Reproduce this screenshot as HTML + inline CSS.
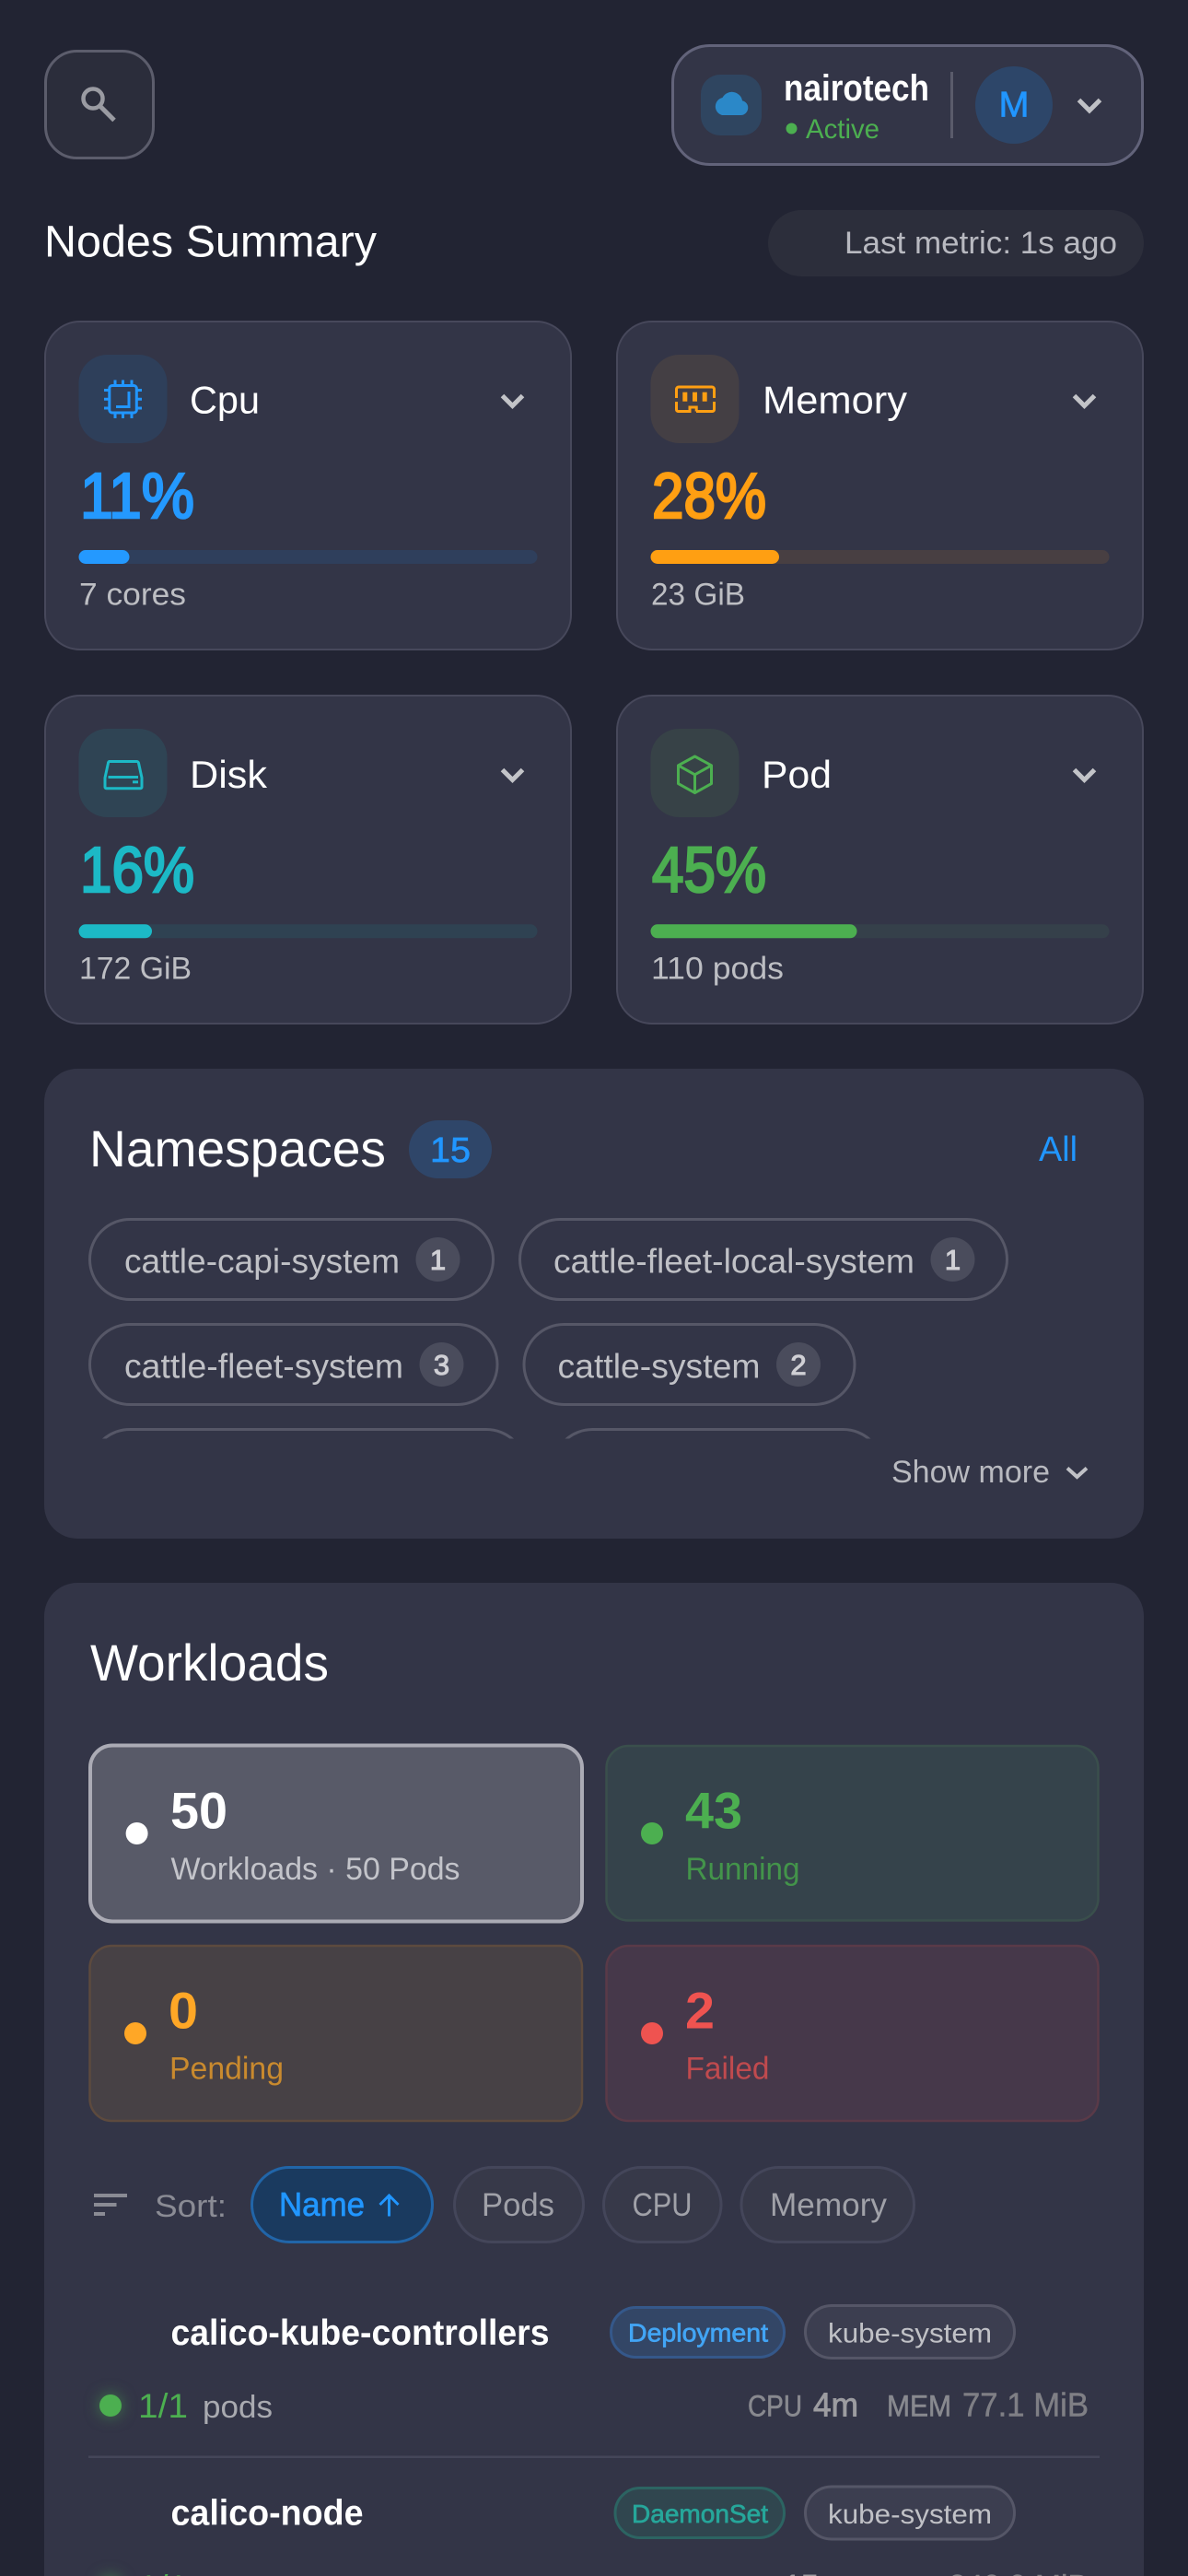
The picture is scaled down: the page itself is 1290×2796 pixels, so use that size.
<!DOCTYPE html>
<html lang="en">
<head>
<meta charset="utf-8">
<title>Dashboard</title>
<style>
html,body{margin:0;padding:0;background:#222433;width:1290px;height:2796px;overflow:hidden}
svg{display:block}
text{font-family:"Liberation Sans",Arial,sans-serif;white-space:pre}
</style>
</head>
<body>
<svg xmlns="http://www.w3.org/2000/svg" width="1290" height="2796" viewBox="0 0 1290 2796">
<defs>
<clipPath id="nsclip"><rect x="48" y="1300" width="1194" height="261.5"/></clipPath>
</defs>
<rect width="1290" height="2796" fill="#222433"/>

<!-- Header -->
<rect x="49.500" y="55.500" width="117" height="116" rx="34" fill="#2b2d3b" stroke="#5c5d6c" stroke-width="3"/>
<circle cx="101" cy="107" r="10.500" fill="none" stroke="#9a9ba2" stroke-width="4.500"/>
<path d="M109 115.500L124 130.500" fill="none" stroke="#9a9ba2" stroke-width="5"/>

<rect x="730.500" y="49.500" width="510" height="129" rx="40" fill="#333547" stroke="#62637a" stroke-width="3"/>
<rect x="761" y="81" width="66" height="66" rx="21" fill="#2f4560"/>
<path d="M784 125h20.500a8 8 0 0 0 1.500-15.800a11.500 11.500 0 0 0-21.500-3.200a9.800 9.800 0 0 0-.5 19z" fill="#2b88c8"/>
<text x="851" y="109" font-size="40" font-weight="700" fill="#ffffff" textLength="158" lengthAdjust="spacingAndGlyphs">nairotech</text>
<circle cx="859.500" cy="139.500" r="6" fill="#4caf50"/>
<text x="875" y="150" font-size="29.500" fill="#4caf50" textLength="80" lengthAdjust="spacingAndGlyphs">Active</text>
<rect x="1032" y="78" width="3" height="72" fill="#5a5b6b"/>
<circle cx="1101" cy="114" r="42" fill="#2d4669"/>
<text x="1084.500" y="126.700" font-size="39" fill="#2196ff" stroke="#2196ff" stroke-width=".7" textLength="33" lengthAdjust="spacingAndGlyphs">M</text>
<polyline points="1171.500,108.500 1183,120 1194.500,108.500" fill="none" stroke="#c0c1c6" stroke-width="5"/>

<!-- Nodes summary -->
<text x="48" y="278.500" font-size="48" fill="#ffffff" textLength="361" lengthAdjust="spacingAndGlyphs">Nodes Summary</text>
<rect x="834" y="228" width="408" height="72" rx="36" fill="#2c2e3b"/>
<text x="917" y="275" font-size="34" fill="#b8b9c0" textLength="296" lengthAdjust="spacingAndGlyphs">Last metric: 1s ago</text>

<!-- Cpu -->
<rect x="49" y="349" width="571" height="356" rx="38" fill="#333547" stroke="#47485b" stroke-width="2"/>
<rect x="85.500" y="385" width="96" height="96" rx="31" fill="#2e3f5a"/>
<g fill="none" stroke="#2196ff" stroke-width="3">
<rect x="118.800" y="418.500" width="29.500" height="29.500" rx="3"/>
<path d="M140 425v16.500h-14"/>
<path d="M125 412.500v6M133.500 412.500v6M143 412.500v6M125 448v6M133.500 448v6M143 448v6M113 423.500h6M113 433.300h6M113 443h6M148 423.500h6M148 433.300h6M148 443h6"/>
</g>
<text x="206" y="448.300" font-size="41.500" fill="#ffffff" textLength="76" lengthAdjust="spacingAndGlyphs">Cpu</text>
<polyline points="545.500,429.500 556.500,440.500 567.500,429.500" fill="none" stroke="#c3c4c8" stroke-width="5"/>
<text x="87" y="562" font-size="70" fill="#2499ff" stroke="#2499ff" stroke-width="2.600" textLength="124" lengthAdjust="spacingAndGlyphs">11%</text>
<rect x="85.500" y="597" width="498" height="15" rx="7.500" fill="#2f3f5c"/>
<rect x="85.500" y="597" width="55" height="15" rx="7.500" fill="#2499ff"/>
<text x="86" y="656.700" font-size="34" fill="#bdbec3" textLength="116" lengthAdjust="spacingAndGlyphs">7 cores</text>

<!-- Memory -->
<rect x="670" y="349" width="571" height="356" rx="38" fill="#333547" stroke="#47485b" stroke-width="2"/>
<rect x="706.500" y="385" width="96" height="96" rx="31" fill="#443f44"/>
<g fill="none" stroke="#ff9f12" stroke-width="3">
<path d="M734.500 432v-9.500a2.500 2.500 0 0 1 2.500-2.500h36a2.500 2.500 0 0 1 2.500 2.500v9.500"/>
<path d="M734.500 436v8.500a2 2 0 0 0 2 2h12.500v-4.500h7.200v4.500"/>
<path d="M756 446.500h17.500a2 2 0 0 0 2-2v-8.500"/>
</g>
<g fill="#ff9f12"><rect x="741.300" y="425.700" width="5" height="10"/><rect x="752" y="425.700" width="5" height="10"/><rect x="762.700" y="425.700" width="5" height="10"/></g>
<text x="828" y="448.300" font-size="41.500" fill="#ffffff" textLength="157" lengthAdjust="spacingAndGlyphs">Memory</text>
<polyline points="1166.500,429.500 1177.500,440.500 1188.500,429.500" fill="none" stroke="#c3c4c8" stroke-width="5"/>
<text x="708" y="562" font-size="70" fill="#ff9f12" stroke="#ff9f12" stroke-width="2.600" textLength="124" lengthAdjust="spacingAndGlyphs">28%</text>
<rect x="706.500" y="597" width="498" height="15" rx="7.500" fill="#483f42"/>
<rect x="706.500" y="597" width="139.500" height="15" rx="7.500" fill="#ff9f12"/>
<text x="707" y="656.700" font-size="34" fill="#bdbec3" textLength="102" lengthAdjust="spacingAndGlyphs">23 GiB</text>

<!-- Disk -->
<rect x="49" y="755" width="571" height="356" rx="38" fill="#333547" stroke="#47485b" stroke-width="2"/>
<rect x="85.500" y="791" width="96" height="96" rx="31" fill="#2f4454"/>
<g fill="none" stroke="#1cb9c6" stroke-width="3">
<path d="M118.500 826.500h30a2 2 0 0 1 2 1.700l3.500 16v10a1.500 1.500 0 0 1-1.500 1.500h-37a1.500 1.500 0 0 1-1.500-1.500v-10l3.500-16a2 2 0 0 1 1-1.700z"/>
<path d="M117.500 843.500h32.500"/>
</g>
<rect x="144" y="847.300" width="6" height="3" fill="#1cb9c6"/>
<text x="206" y="854.800" font-size="41.500" fill="#ffffff" textLength="84" lengthAdjust="spacingAndGlyphs">Disk</text>
<polyline points="545.500,835.500 556.500,846.500 567.500,835.500" fill="none" stroke="#c3c4c8" stroke-width="5"/>
<text x="87" y="968" font-size="70" fill="#1cb9c6" stroke="#1cb9c6" stroke-width="2.600" textLength="124" lengthAdjust="spacingAndGlyphs">16%</text>
<rect x="85.500" y="1003.300" width="498" height="15" rx="7.500" fill="#2f4252"/>
<rect x="85.500" y="1003.300" width="79.500" height="15" rx="7.500" fill="#1cb9c6"/>
<text x="86" y="1062.700" font-size="34" fill="#bdbec3" textLength="122" lengthAdjust="spacingAndGlyphs">172 GiB</text>

<!-- Pod -->
<rect x="670" y="755" width="571" height="356" rx="38" fill="#333547" stroke="#47485b" stroke-width="2"/>
<rect x="706.500" y="791" width="96" height="96" rx="31" fill="#374247"/>
<path d="M754.500 821l18 9.800v19.800l-18 10-18-10v-19.800zM736.500 830.800l18 10 18-10M754.500 840.800v20" fill="none" stroke="#4caf50" stroke-width="3" stroke-linejoin="round"/>
<text x="827" y="854.800" font-size="41.500" fill="#ffffff" textLength="76" lengthAdjust="spacingAndGlyphs">Pod</text>
<polyline points="1166.500,835.500 1177.500,846.500 1188.500,835.500" fill="none" stroke="#c3c4c8" stroke-width="5"/>
<text x="708" y="968" font-size="70" fill="#4caf50" stroke="#4caf50" stroke-width="2.600" textLength="124" lengthAdjust="spacingAndGlyphs">45%</text>
<rect x="706.500" y="1003.300" width="498" height="15" rx="7.500" fill="#35404a"/>
<rect x="706.500" y="1003.300" width="224" height="15" rx="7.500" fill="#4caf50"/>
<text x="707" y="1062.700" font-size="34" fill="#bdbec3" textLength="144" lengthAdjust="spacingAndGlyphs">110 pods</text>

<!-- Namespaces -->
<rect x="48" y="1160" width="1194" height="510" rx="36" fill="#333547"/>
<text x="97" y="1266" font-size="55.500" fill="#ffffff" textLength="322" lengthAdjust="spacingAndGlyphs">Namespaces</text>
<rect x="444" y="1216" width="90" height="63" rx="31.500" fill="#2f4669"/>
<text x="467" y="1261" font-size="38" fill="#2196ff" stroke="#2196ff" stroke-width=".7" textLength="44" lengthAdjust="spacingAndGlyphs">15</text>
<text x="1128" y="1260" font-size="38" fill="#2196ff" textLength="42" lengthAdjust="spacingAndGlyphs">All</text>

<g fill="none" stroke="#565767" stroke-width="3">
<rect x="97.500" y="1323.500" width="438" height="87" rx="43.500"/>
<rect x="564.500" y="1323.500" width="529" height="87" rx="43.500"/>
<rect x="97.500" y="1437.500" width="442.500" height="87" rx="43.500"/>
<rect x="569" y="1437.500" width="359" height="87" rx="43.500"/>
<g clip-path="url(#nsclip)">
<rect x="97.500" y="1551.500" width="474" height="87" rx="43.500"/>
<rect x="600" y="1551.500" width="359" height="87" rx="43.500"/>
</g>
</g>
<g font-size="37" fill="#c0c1c6">
<text x="135" y="1381.500" textLength="299" lengthAdjust="spacingAndGlyphs">cattle-capi-system</text>
<text x="601" y="1381.500" textLength="392" lengthAdjust="spacingAndGlyphs">cattle-fleet-local-system</text>
<text x="135" y="1495.500" textLength="303" lengthAdjust="spacingAndGlyphs">cattle-fleet-system</text>
<text x="605.500" y="1495.500" textLength="220" lengthAdjust="spacingAndGlyphs">cattle-system</text>
</g>
<g fill="#4a4c5c">
<circle cx="475.500" cy="1367" r="24"/>
<circle cx="1034.500" cy="1367" r="24"/>
<circle cx="479.500" cy="1481" r="24"/>
<circle cx="867" cy="1481" r="24"/>
</g>
<g font-size="31" fill="#d0d0d5" stroke="#d0d0d5" stroke-width="1.100" text-anchor="middle">
<text x="475.500" y="1378">1</text>
<text x="1034.500" y="1378">1</text>
<text x="479.500" y="1492">3</text>
<text x="867" y="1492">2</text>
</g>
<text x="968" y="1609" font-size="34" fill="#b9bac0" textLength="172" lengthAdjust="spacingAndGlyphs">Show more</text>
<polyline points="1159,1593.500 1169.500,1603 1180,1593.500" fill="none" stroke="#c0c1c6" stroke-width="4"/>

<!-- Workloads -->
<rect x="48" y="1718" width="1194" height="1200" rx="36" fill="#333547"/>
<text x="98" y="1824" font-size="55.500" fill="#ffffff" textLength="259" lengthAdjust="spacingAndGlyphs">Workloads</text>

<rect x="98" y="1894.500" width="534" height="191" rx="24" fill="#585a68" stroke="#ababb5" stroke-width="4"/>
<rect x="658.500" y="1895" width="534" height="189.500" rx="24" fill="#35434b" stroke="#3a4f4c" stroke-width="2.500"/>
<rect x="97.500" y="2112" width="534.500" height="190" rx="24" fill="#474145" stroke="#5d4a3e" stroke-width="2.500"/>
<rect x="658.500" y="2112" width="534" height="190" rx="24" fill="#46384a" stroke="#5a3a48" stroke-width="2.500"/>

<circle cx="148.600" cy="1990" r="12" fill="#ffffff"/>
<circle cx="708" cy="1990" r="12" fill="#4caf50"/>
<circle cx="147" cy="2207" r="12" fill="#ffa726"/>
<circle cx="708" cy="2207" r="12" fill="#ef5350"/>

<g font-size="56" font-weight="700">
<text x="185" y="1984.700" fill="#ffffff" textLength="62" lengthAdjust="spacingAndGlyphs">50</text>
<text x="744" y="1984.700" fill="#4caf50" textLength="62" lengthAdjust="spacingAndGlyphs">43</text>
<text x="183" y="2201.400" fill="#ffa726" textLength="32" lengthAdjust="spacingAndGlyphs">0</text>
<text x="744" y="2201.400" fill="#ef5350" textLength="32" lengthAdjust="spacingAndGlyphs">2</text>
</g>
<g font-size="34">
<text x="185.500" y="2040" fill="#c3c4ca" textLength="314" lengthAdjust="spacingAndGlyphs">Workloads · 50 Pods</text>
<text x="744.500" y="2040" fill="#43944a" textLength="124" lengthAdjust="spacingAndGlyphs">Running</text>
<text x="184" y="2256.700" fill="#c98a2e" textLength="124" lengthAdjust="spacingAndGlyphs">Pending</text>
<text x="744.500" y="2256.700" fill="#c04a4e" textLength="91" lengthAdjust="spacingAndGlyphs">Failed</text>
</g>

<!-- Sort -->
<g fill="#8a8b94">
<rect x="102" y="2381" width="36" height="4"/>
<rect x="102" y="2391" width="24.500" height="4"/>
<rect x="102" y="2401" width="12" height="4"/>
</g>
<text x="168" y="2406" font-size="34" fill="#8a8b94" textLength="78" lengthAdjust="spacingAndGlyphs">Sort:</text>
<rect x="273.500" y="2352.500" width="196" height="81" rx="40.500" fill="#1a3a5f" stroke="#2165a8" stroke-width="3"/>
<text x="303" y="2405" font-size="36" fill="#2196ff" stroke="#2196ff" stroke-width=".7" textLength="93" lengthAdjust="spacingAndGlyphs">Name</text>
<path d="M422.500 2383.500v22M412.500 2393l10-10 10 10" fill="none" stroke="#2196ff" stroke-width="3"/>
<g fill="#373949" stroke="#44465a" stroke-width="3">
<rect x="493.500" y="2352.500" width="140" height="81" rx="40.500"/>
<rect x="655.500" y="2352.500" width="127.500" height="81" rx="40.500"/>
<rect x="805" y="2352.500" width="187.500" height="81" rx="40.500"/>
</g>
<g font-size="35" fill="#a0a1a8">
<text x="523" y="2405" textLength="79" lengthAdjust="spacingAndGlyphs">Pods</text>
<text x="686.500" y="2405" textLength="65" lengthAdjust="spacingAndGlyphs">CPU</text>
<text x="836" y="2405" textLength="127" lengthAdjust="spacingAndGlyphs">Memory</text>
</g>

<!-- Row 1 -->
<text x="185.500" y="2545" font-size="39" font-weight="700" fill="#ffffff" textLength="411" lengthAdjust="spacingAndGlyphs">calico-kube-controllers</text>
<rect x="663.500" y="2504.500" width="188" height="54" rx="27" fill="#334666" stroke="#35588a" stroke-width="3"/>
<text x="682" y="2541.700" font-size="28" fill="#42a5f5" stroke="#42a5f5" stroke-width=".7" textLength="152" lengthAdjust="spacingAndGlyphs">Deployment</text>
<rect x="874.500" y="2502.500" width="227" height="57" rx="28.500" fill="#3c3e50" stroke="#555667" stroke-width="3"/>
<text x="899" y="2542.700" font-size="30" fill="#c0c1c6" textLength="178" lengthAdjust="spacingAndGlyphs">kube-system</text>
<circle cx="120" cy="2611" r="12" fill="#4caf50" style="filter:drop-shadow(0 0 8px rgba(76,175,80,.55))"/>
<text x="150" y="2624" font-size="37" fill="#4caf50" textLength="54" lengthAdjust="spacingAndGlyphs">1/1</text>
<text x="220" y="2624" font-size="34" fill="#a9aab0" textLength="76" lengthAdjust="spacingAndGlyphs">pods</text>
<text x="812" y="2622.700" font-size="32" fill="#88898f" stroke="#88898f" stroke-width=".6" textLength="59" lengthAdjust="spacingAndGlyphs">CPU</text>
<text x="883" y="2622.700" font-size="36" fill="#9c9ca0" stroke="#9c9ca0" stroke-width=".9" textLength="49" lengthAdjust="spacingAndGlyphs">4m</text>
<text x="963" y="2622.700" font-size="32" fill="#88898f" stroke="#88898f" stroke-width=".6" textLength="70" lengthAdjust="spacingAndGlyphs">MEM</text>
<text x="1045" y="2622.700" font-size="36" fill="#7f7f85" stroke="#7f7f85" stroke-width=".5" textLength="137" lengthAdjust="spacingAndGlyphs">77.1 MiB</text>
<rect x="96" y="2665.500" width="1098" height="2.500" fill="#444659"/>

<!-- Row 2 -->
<text x="185.500" y="2740.700" font-size="39" font-weight="700" fill="#ffffff" textLength="209" lengthAdjust="spacingAndGlyphs">calico-node</text>
<rect x="668" y="2700.500" width="183.500" height="54" rx="27" fill="#30464f" stroke="#2c6462" stroke-width="3"/>
<text x="686" y="2738" font-size="28" fill="#26a69a" stroke="#26a69a" stroke-width=".7" textLength="148" lengthAdjust="spacingAndGlyphs">DaemonSet</text>
<rect x="874.500" y="2699" width="227" height="57" rx="28.500" fill="#3c3e50" stroke="#555667" stroke-width="3"/>
<text x="899" y="2739" font-size="30" fill="#c0c1c6" textLength="178" lengthAdjust="spacingAndGlyphs">kube-system</text>
<circle cx="120" cy="2808" r="12" fill="#4caf50" style="filter:drop-shadow(0 0 8px rgba(76,175,80,.55))"/>
<text x="150" y="2821" font-size="37" fill="#4caf50" textLength="54" lengthAdjust="spacingAndGlyphs">1/1</text>
<text x="220" y="2821" font-size="34" fill="#a9aab0" textLength="76" lengthAdjust="spacingAndGlyphs">pods</text>
<text x="851" y="2820" font-size="36" fill="#9c9ca0" stroke="#9c9ca0" stroke-width=".9" textLength="66" lengthAdjust="spacingAndGlyphs">15m</text>
<text x="1030" y="2820" font-size="36" fill="#7f7f85" stroke="#7f7f85" stroke-width=".5" textLength="152" lengthAdjust="spacingAndGlyphs">240.9 MiB</text>
</svg>
</body>
</html>
